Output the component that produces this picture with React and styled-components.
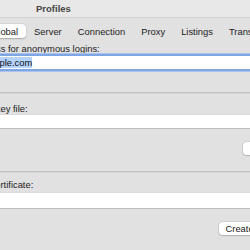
import React from 'react'
import styled, { createGlobalStyle } from 'styled-components'

const Global = createGlobalStyle`
html, body {
  margin:0;
  padding:0;
  background:#e1e1e1;
}
body {
  font-family:"Liberation Sans", Arial, sans-serif;
}
`

const Viewport = styled.div`
width:250px;
height:250px;
overflow:hidden;
background:#e1e1e1;
`
const Window = styled.div`
width:330px;
margin-left:-36px;
display:flex;
flex-direction:column;
`
const TitleBar = styled.div`
height:17px;
background:#e8e8e8;
border-bottom:1px solid #d2d2d2;
display:flex;
align-items:center;
padding-left:72px;
`
const Title = styled.h1`
margin:0;
font-size:9.5px;
font-weight:700;
color:#444;
`
const TabStrip = styled.div`
display:flex;
align-items:center;
margin:6px 0 0 19px;
height:14px;
`
const Tab = styled.div`
height:14px;
display:flex;
align-items:center;
padding:0 8px;
font-size:9.4px;
color:#222;
border-radius:4px;
background:${p => p.$active ? '#fff' : 'transparent'};
box-shadow:${p => p.$active ? '0 0.5px 1.5px rgba(0,0,0,0.25)' : 'none'};
`
const Divider = styled.span`
width:1px;
height:9px;
background:${p => p.$hidden ? 'transparent' : '#c9c9c9'};
`
const Section = styled.section`
display:flex;
flex-direction:column;
padding:${p => p.$pad};
border-bottom:${p => p.$last ? 'none' : '1px solid #c2c2c2'};
box-shadow:${p => p.$last ? 'none' : '0 1px 0 #d4d4d4'};
`
const Label = styled.label`
font-size:9.4px;
line-height:11px;
color:#222;
margin-left:${p => p.$indent || 0}px;
`
const Field = styled.div`
height:${p => p.$h || 13}px;
background:#fff;
margin-top:${p => p.$gap || 2}px;
box-shadow:${p => p.$focus
  ? '0 0 0 2px #7ea6e4, 0 0 0 3px #a9c3ee'
  : '0 1px 0 #bdbdbd, 0 0 0 0.5px #d6d6d6'};
display:flex;
align-items:center;
padding-left:3px;
font-size:9.4px;
color:#111;
overflow:hidden;
`
const Selected = styled.span`
background:#b3d3fd;
line-height:11px;
white-space:nowrap;
margin-left:${p => p.$indent || 0}px;
`
const ButtonRow = styled.div`
display:flex;
justify-content:flex-end;
padding-right:25px;
margin-top:${p => p.$gap}px;
`
const Button = styled.button`
height:13px;
min-width:26px;
padding:0 6px;
border:none;
border-radius:3.5px;
background:#fff;
box-shadow:0 0.5px 1.5px rgba(0,0,0,0.3), 0 0 0 0.5px rgba(0,0,0,0.08);
font-family:inherit;
font-size:9.4px;
color:#222;
line-height:13px;
text-align:center;
`

const tabs = ['Global', 'Server', 'Connection', 'Proxy', 'Listings', 'Transfers', 'Advanced']

export default function App() {
  return (
    <Viewport>
      <Global />
      <Window>
        <TitleBar>
          <Title>Profiles</Title>
        </TitleBar>
        <TabStrip>
          {tabs.map((t, i) => (
            <React.Fragment key={t}>
              {i > 0 && <Divider $hidden={i === 1} />}
              <Tab $active={i === 0}>{t}</Tab>
            </React.Fragment>
          ))}
        </TabStrip>
        <Section $pad="5px 0 23px">
          <Label $indent={-18}>Email address for anonymous logins:</Label>
          <Field $focus $gap={2}>
            <Selected $indent={-13}>me@example.com</Selected>
          </Field>
        </Section>
        <Section $pad="10px 0 16px">
          <Label>Private key file:</Label>
          <Field $gap={1} />
          <ButtonRow $gap={14}>
            <Button>…</Button>
          </ButtonRow>
        </Section>
        <Section $pad="7px 0 16px" $last>
          <Label>Client certificate:</Label>
          <Field $gap={3} $h={15} />
          <ButtonRow $gap={14}>
            <Button>Create…</Button>
          </ButtonRow>
        </Section>
      </Window>
    </Viewport>
  )
}
